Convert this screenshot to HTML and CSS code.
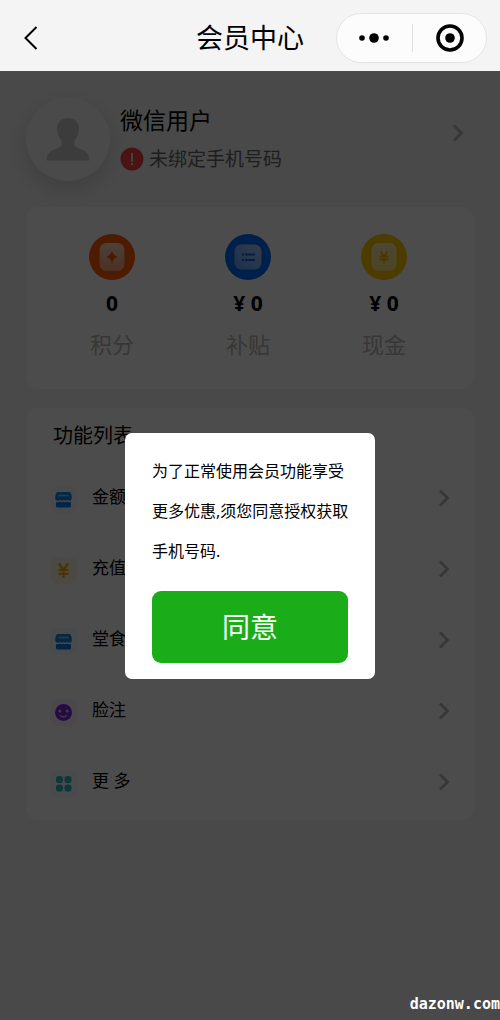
FILE: index.html
```html
<!DOCTYPE html>
<html lang="zh-CN">
<head>
<meta charset="utf-8">
<meta name="viewport" content="width=device-width, initial-scale=1">
<title>会员中心</title>
<link rel="stylesheet" href="styles.css">
</head>
<body>
<svg class="defs" aria-hidden="true">
  <defs>
    <linearGradient id="g-orange" x1="0" y1="0" x2="0" y2="1"><stop offset="0" stop-color="#ffd9c4"/><stop offset="1" stop-color="#ff9e70"/></linearGradient>
    <linearGradient id="g-blue" x1="1" y1="0" x2="0" y2="1"><stop offset="0" stop-color="#a9cdff"/><stop offset="1" stop-color="#5f9ff8"/></linearGradient>
    <linearGradient id="g-yellow" x1="0" y1="0" x2="0" y2="1"><stop offset="0" stop-color="#fff0b0"/><stop offset="1" stop-color="#ffe27a"/></linearGradient>
    <symbol id="chevron" viewBox="0 0 12 20"><path d="M2 2.500 L9.500 10 L2 17.500" fill="none" stroke="currentColor" stroke-width="2.800"/></symbol>
    <symbol id="shop" viewBox="0 0 27 27">
      <path d="M8 6h11q1.500 0 2 1.500l.8 3v2q0 2-2 2.300-1.500.2-2.500-.8-1.900 1.500-3.800 0-1.900 1.500-3.800 0-1 1-2.500.8-2-.3-2-2.300v-2l.8-3Q6.500 6 8 6z" fill="#1687e8"/>
      <path d="M9 9.500h9" stroke="#8cc8fa" stroke-width="1.500" stroke-linecap="round"/>
      <path d="M6 16q2 .6 3.700-.5 1.900 1.300 3.800 0 1.900 1.300 3.800 0 1.700 1.100 3.700.5v4q0 1.500-1.500 1.500h-12Q6 21.500 6 20z" fill="#0d7be0"/>
    </symbol>
  </defs>
</svg>

<header class="navbar">
  <button class="back" type="button" aria-label="返回">
    <svg width="14" height="24" viewBox="0 0 14 24"><path d="M12.500 1L1.500 12l11 11" fill="none" stroke="#000" stroke-width="2"/></svg>
  </button>
  <h1 class="navbar-title">会员中心</h1>
  <div class="capsule">
    <button class="capsule-btn" type="button" aria-label="更多操作">
      <svg width="30" height="10" viewBox="0 0 30 10"><circle cx="3" cy="5" r="2.800"/><circle cx="15" cy="5" r="4.800"/><circle cx="27" cy="5" r="2.800"/></svg>
    </button>
    <button class="capsule-btn" type="button" aria-label="关闭">
      <svg width="28" height="28" viewBox="0 0 28 28"><circle cx="14" cy="14" r="12" fill="none" stroke="#000" stroke-width="3.600"/><circle cx="14" cy="14" r="4.800"/></svg>
    </button>
  </div>
</header>

<main class="page">
  <a class="profile" href="#profile">
    <span class="avatar">
      <svg width="44" height="44" viewBox="0 0 44 44"><path d="M22 0c7 0 11 4.500 11 11 0 5-2 9-4.500 12v3.500c0 1.500 1 2.500 3 3.200C38 32 43.500 34.500 43.500 42.500H.5C.5 34.500 6 32 12.500 29.700c2-.7 3-1.700 3-3.200V23C13 20 11 16 11 11 11 4.500 15 0 22 0z" fill="#c8c8c8"/></svg>
    </span>
    <span class="profile-info">
      <span class="profile-name">微信用户</span>
      <span class="profile-phone"><svg width="24" height="24" viewBox="0 0 24 24"><circle cx="12" cy="12" r="11.500" fill="#f04545"/><path d="M12 6v8.500M12 16v2" stroke="#fff" stroke-width="1.500"/></svg>未绑定手机号码</span>
    </span>
    <svg class="chevron" width="12" height="20"><use href="#chevron"/></svg>
  </a>

  <section class="card stats">
    <div class="stat">
      <svg width="46" height="46" viewBox="0 0 46 46"><circle cx="23" cy="23" r="23" fill="#ff5a00"/><rect x="10.500" y="9" width="25" height="28" rx="7" fill="url(#g-orange)"/><path d="M23 17q1.300 5 6 6-4.700 1-6 6-1.300-5-6-6 4.700-1 6-6z" fill="#f2560c"/></svg>
      <strong class="stat-value">0</strong>
      <span class="stat-label">积分</span>
    </div>
    <div class="stat">
      <svg width="46" height="46" viewBox="0 0 46 46"><circle cx="23" cy="23" r="23" fill="#006cff"/><rect x="9.500" y="10.500" width="27" height="25" rx="7" fill="url(#g-blue)"/><path d="M17 20.500h2M20 20.500h10M17 26h2M20 26h10" stroke="#1265e8" stroke-width="2"/></svg>
      <strong class="stat-value">¥ 0</strong>
      <span class="stat-label">补贴</span>
    </div>
    <div class="stat">
      <svg width="46" height="46" viewBox="0 0 46 46"><circle cx="23" cy="23" r="23" fill="#ffc800"/><rect x="10.500" y="9" width="25" height="28" rx="7" fill="url(#g-yellow)"/><path d="M19.500 17.500l3.500 5 3.500-5M23 22.500V29.500M18.500 22.500h9M18.500 25.500h9" fill="none" stroke="#f2bd00" stroke-width="1.800"/></svg>
      <strong class="stat-value">¥ 0</strong>
      <span class="stat-label">现金</span>
    </div>
  </section>

  <section class="card features">
    <h2 class="features-title">功能列表</h2>
    <nav class="feature-list">
      <a class="feature" href="#balance">
        <svg class="tile tile-blue" width="27" height="27"><use href="#shop"/></svg>
        <span class="feature-label">金额</span>
        <svg class="chevron" width="12" height="20"><use href="#chevron"/></svg>
      </a>
      <a class="feature" href="#recharge">
        <svg class="tile tile-yellow" width="27" height="27" viewBox="0 0 27 27"><path d="M9 6.500l4.500 6.500 4.500-6.500M13.500 13v8M8.500 13h10M8.500 16.800h10" fill="none" stroke="#f5a90c" stroke-width="2.200"/></svg>
        <span class="feature-label">充值</span>
        <svg class="chevron" width="12" height="20"><use href="#chevron"/></svg>
      </a>
      <a class="feature" href="#dine-in">
        <svg class="tile tile-blue" width="27" height="27"><use href="#shop"/></svg>
        <span class="feature-label">堂食</span>
        <svg class="chevron" width="12" height="20"><use href="#chevron"/></svg>
      </a>
      <a class="feature" href="#face">
        <svg class="tile tile-purple" width="27" height="27" viewBox="0 0 27 27"><circle cx="13.500" cy="13.500" r="8.500" fill="#7a2be0"/><circle cx="9.800" cy="12" r="1.500" fill="#d8b8ff"/><circle cx="17.200" cy="12" r="1.500" fill="#d8b8ff"/><path d="M10.500 16.500q3 3 6 0" fill="none" stroke="#d8b8ff" stroke-width="1.500" stroke-linecap="round"/></svg>
        <span class="feature-label">脸注</span>
        <svg class="chevron" width="12" height="20"><use href="#chevron"/></svg>
      </a>
      <a class="feature" href="#more">
        <svg class="tile tile-cyan" width="27" height="27" viewBox="0 0 27 27"><g fill="#38b2c9"><rect x="6" y="6" width="7" height="7" rx="2.800"/><rect x="14.500" y="6" width="7" height="7" rx="2.800"/><rect x="6" y="14.500" width="7" height="7" rx="2.800"/><rect x="14.500" y="14.500" width="7" height="7" rx="2.800"/></g></svg>
        <span class="feature-label">更 多</span>
        <svg class="chevron" width="12" height="20"><use href="#chevron"/></svg>
      </a>
    </nav>
  </section>

  <div class="overlay">
    <div class="dialog" role="dialog" aria-modal="true" aria-describedby="dialog-text">
      <p class="dialog-text" id="dialog-text">为了正常使用会员功能享受<br>更多优惠,须您同意授权获取<br>手机号码.</p>
      <button class="agree" type="button">同意</button>
    </div>
    <span class="watermark">dazonw.com</span>
  </div>
</main>
</body>
</html>
```
FILE: styles.css
```css
* {
  box-sizing: border-box;
}

body {
  margin: 0;
  min-height: 100vh;
  display: flex;
  flex-direction: column;
  background: #f4f4f4;
  color: #000;
  font-family: "Noto Sans", "Noto Sans CJK SC", sans-serif;
}

button {
  padding: 0;
  border: 0;
  background: none;
  font: inherit;
  cursor: pointer;
}

a {
  color: inherit;
  text-decoration: none;
}

svg {
  display: block;
  flex: none;
}

.defs {
  position: absolute;
  width: 0;
  height: 0;
}

/* Navigation bar */
.navbar {
  display: grid;
  grid-template-columns: 1fr auto 1fr;
  align-items: center;
  padding: 13px 13px 8px 24px;
}

.back {
  justify-self: start;
}

.navbar-title {
  margin: 0;
  padding-right: 11px;
  font-size: 27px;
  line-height: 50px;
  font-weight: 400;
}

.capsule {
  justify-self: end;
  display: grid;
  grid-template-columns: 1fr 1fr;
  width: 151px;
  height: 50px;
  border: 1px solid #e4e4e4;
  border-radius: 25px;
  background: #fcfcfc;
}

.capsule-btn {
  display: grid;
  place-items: center;
  margin: 10px 0;
}

.capsule-btn + .capsule-btn {
  padding-left: 2px;
  border-left: 1px solid #e0e0e0;
}

/* Page */
.page {
  position: relative;
  flex: 1;
  padding: 26px 26px 80px;
}

.chevron {
  margin-left: auto;
  color: #b8b8b8;
}

.profile {
  display: flex;
  align-items: center;
  gap: 10px;
  padding-right: 10px;
  margin-bottom: 26px;
}

.profile .chevron {
  margin-bottom: 12px;
}

.avatar {
  display: grid;
  place-items: center;
  width: 84px;
  height: 84px;
  padding-top: 2px;
  border-radius: 50%;
  background: #f9f9f9;
  box-shadow: 0 8px 20px rgba(0, 0, 0, 0.14);
}

.profile-info {
  display: flex;
  flex-direction: column;
  gap: 6px;
  padding-bottom: 2px;
}

.profile-name {
  font-size: 23px;
  line-height: 36px;
}

.profile-phone {
  display: flex;
  align-items: center;
  gap: 5px;
  font-size: 19px;
  line-height: 30px;
  color: #666;
}

.card {
  border-radius: 12px;
  background: #fff;
}

.stats {
  display: grid;
  grid-template-columns: repeat(3, 1fr);
  padding: 27px 22px 32px 18px;
  margin-bottom: 19px;
}

.stat {
  display: flex;
  flex-direction: column;
  align-items: center;
}

.stat-value {
  margin-bottom: 5px;
  font-size: 21px;
  line-height: 46px;
}

.stat-label {
  font-size: 22px;
  line-height: 26px;
  color: #b8b8b8;
}

.features {
  padding: 2px 24px 3px;
}

.features-title {
  margin: 0;
  padding: 0 3px;
  font-size: 20px;
  line-height: 52px;
  font-weight: 400;
}

.feature {
  display: flex;
  align-items: center;
  gap: 15px;
  height: 71px;
}

.feature-label {
  padding-bottom: 2px;
  font-size: 17px;
  line-height: 26px;
}

.tile {
  margin-top: 4px;
  border-radius: 8px;
}

.tile-blue { background: #f3f8ff; }
.tile-yellow { background: #fff5e6; }
.tile-purple { background: #f8f0ff; }
.tile-cyan { background: #eefafc; }

/* Dialog */
.overlay {
  position: absolute;
  inset: 0;
  display: grid;
  place-items: center;
  padding-top: 21px;
  background: rgba(0, 0, 0, 0.7);
}

.dialog {
  width: 50%;
  min-width: 250px;
  padding: 18px 27px 16px;
  border-radius: 7px;
  background: #fff;
}

.dialog-text {
  margin: 0 0 20px;
  font-size: 16px;
  line-height: 40px;
  white-space: nowrap;
}

.agree {
  width: 100%;
  border-radius: 9px;
  background: #1aad19;
  color: #fff;
  font-size: 28px;
  line-height: 72px;
}

.watermark {
  position: absolute;
  right: 0;
  bottom: 6px;
  color: #fff;
  font-family: "DejaVu Sans Mono", monospace;
  font-size: 15px;
  font-weight: 700;
  line-height: 20px;
}
```
